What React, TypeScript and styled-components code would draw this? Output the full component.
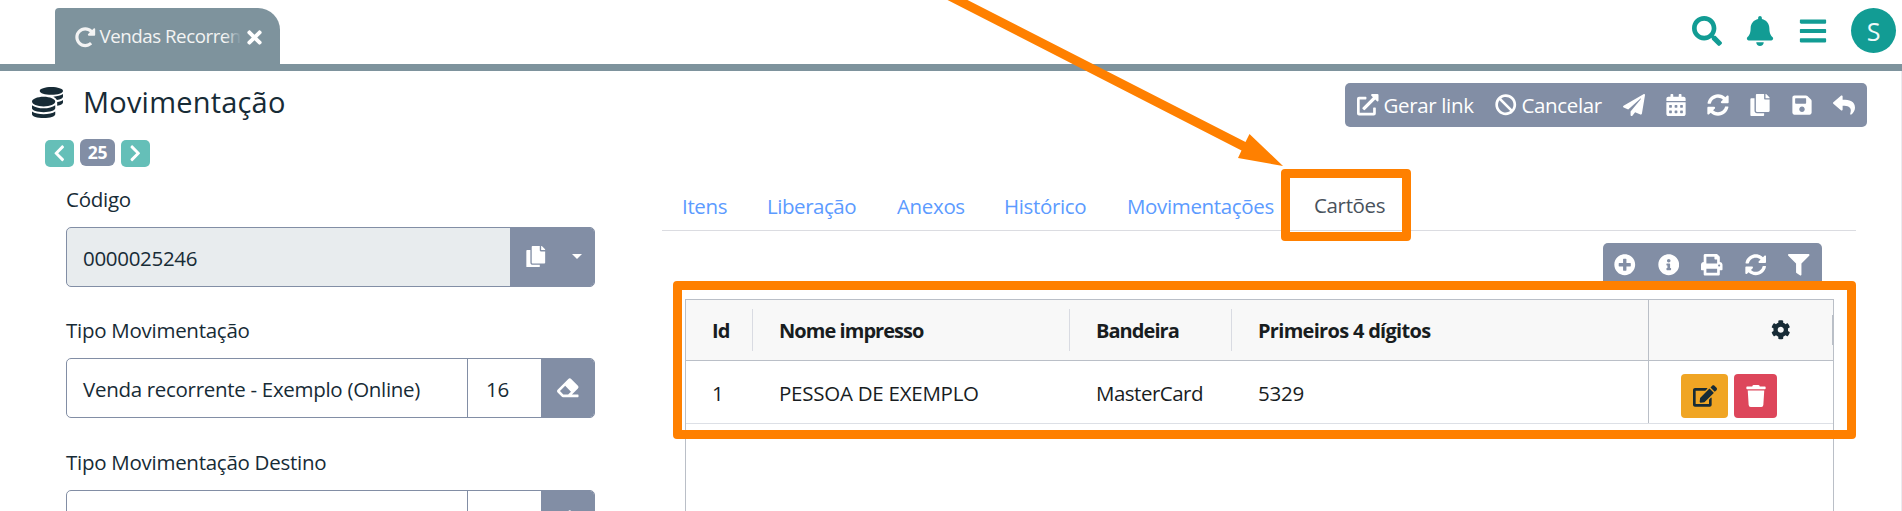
import React from 'react';
import styled, { createGlobalStyle } from 'styled-components';
import {
  FaBan, FaBars, FaBell, FaCalendarAlt, FaChevronLeft, FaChevronRight, FaCog, FaCoins, FaCopy,
  FaEdit, FaEraser, FaExternalLinkAlt, FaFilter, FaInfoCircle, FaPaperPlane, FaPlusCircle,
  FaPrint, FaRedoAlt, FaReply, FaSave, FaSearch, FaSyncAlt, FaTimes, FaTrash,
} from 'react-icons/fa';

const slate = '#828ea5';
const bar = '#7e939d';
const teal = '#129c94';
const ink = '#172b36';
const orange = '#ff8000';

const GlobalStyle = createGlobalStyle`
  * { box-sizing: border-box; }
  html, body { margin: 0; overflow: hidden; background: #fff; }
  body { font: 400 20.5px/30px 'Open Sans', 'Noto Sans', sans-serif; color: ${ink}; letter-spacing: -0.27px; }
  svg { display: block; flex: none; }
`;

const Page = styled.div`
  position: relative;
  height: 511px;
  overflow: hidden;
`;

const TopBar = styled.header`
  display: flex;
  justify-content: space-between;
  height: 71px;
  padding: 0 6px 0 55px;
  border-bottom: 7px solid ${bar};
`;

const WindowTab = styled.div`
  display: flex;
  align-items: center;
  align-self: flex-end;
  width: 225px;
  height: 56px;
  padding: 3px 15px 0 20px;
  border-radius: 4px 22px 0 0;
  background: ${bar};
  color: #f3f3f3;
  font-size: 18.7px;
`;

const WindowTitle = styled.span`
  position: relative;
  flex: none;
  margin: -3px 0 0 4px;
  white-space: nowrap;
  letter-spacing: -0.45px;
  &::after {
    content: '';
    position: absolute;
    inset: 0 0 0 auto;
    width: 16px;
    background: linear-gradient(to right, transparent, ${bar});
  }
`;

const CloseIcon = styled(FaTimes)`
  margin-left: auto;
  color: #fff;
`;

const TopActions = styled.div`
  display: flex;
  align-items: center;
  gap: 23px;
  height: 61px;
  color: ${teal};
`;

const Avatar = styled.div`
  width: 45px;
  height: 45px;
  border-radius: 50%;
  background: ${teal};
  color: #eefafa;
  font-size: 25px;
  line-height: 46px;
  text-align: center;
`;

const Main = styled.main`
  height: 560px;
  border-right: 1px solid #ebebf0;
`;

const TitleRow = styled.div`
  display: flex;
  justify-content: space-between;
  height: 68px;
  padding: 12px 34px 0 32px;
`;

const Heading = styled.h1`
  display: flex;
  align-items: center;
  gap: 20px;
  height: 38px;
  margin: 0;
  font-size: 29px;
  font-weight: 500;
  letter-spacing: 0.2px;
`;

const ActionBar = styled.div`
  display: flex;
  align-items: center;
  width: 522px;
  height: 44px;
  padding-left: 12px;
  border-radius: 5px;
  background: ${slate};
  color: #fff;
`;

const Action = styled.div<{ $width?: number }>`
  display: flex;
  flex: none;
  align-items: center;
  gap: 5px;
  width: ${p => p.$width ?? 42}px;
  white-space: nowrap;
  letter-spacing: -0.35px;
`;

const Pager = styled.div`
  display: flex;
  gap: 6px;
  height: 28px;
  padding-left: 45px;
`;

const PageStep = styled.div`
  display: flex;
  align-items: center;
  justify-content: center;
  width: 29px;
  height: 27px;
  margin-top: 1px;
  border-radius: 5px;
  background: #65bfb8;
  color: #fff;
`;

const PageNumber = styled.div`
  width: 35px;
  height: 27px;
  border-radius: 6px;
  background: ${slate};
  color: #fff;
  font-size: 17.5px;
  font-weight: 700;
  line-height: 27px;
  text-align: center;
`;

const Columns = styled.div`
  display: flex;
`;

const Form = styled.div`
  width: 662px;
  padding: 17px 67px 0 66px;
`;

const Field = styled.div`
  display: flex;
  flex-direction: column;
  gap: 13px;
  margin-bottom: 28.4px;
`;

const InputGroup = styled.div<{ $disabled?: boolean }>`
  display: flex;
  height: 60px;
  border: 1px solid ${slate};
  border-radius: 5px;
  overflow: hidden;
  background: ${p => (p.$disabled ? '#e8ecee' : '#fff')};
`;

const Value = styled.div`
  flex: 1;
  padding-left: 16px;
  line-height: 60px;
  letter-spacing: -0.3px;
`;

const Code = styled.div`
  width: 74px;
  padding-left: 18px;
  border-left: 1px solid ${slate};
  line-height: 60px;
`;

const Addon = styled.div<{ $width: number }>`
  display: flex;
  align-items: center;
  gap: 25px;
  width: ${p => p.$width}px;
  padding: 0 0 1px ${p => (p.$width > 60 ? 15 : 16)}px;
  background: ${slate};
  color: #fff;
`;

const Caret = styled.i`
  border: 5.5px solid transparent;
  border-top-color: #fff;
  border-bottom: 0;
`;

const Detail = styled.section`
  width: 1194px;
  padding-top: 12px;
`;

const Tabs = styled.nav`
  display: flex;
  height: 52px;
  border-bottom: 1px solid #dbdce1;
`;

const Tab = styled.div<{ $width: number; $active?: boolean; $ls?: number }>`
  width: ${p => p.$width}px;
  height: 52px;
  padding: 11px 0 0 19px;
  border: 1px solid ${p => (p.$active ? '#dbdce1 #dbdce1 #fff' : 'transparent')};
  border-bottom-width: ${p => (p.$active ? 1 : 0)}px;
  border-radius: 5px 5px 0 0;
  color: ${p => (p.$active ? '#49525c' : '#5c9bff')};
  letter-spacing: ${p => p.$ls ?? -0.35}px;
`;

const GridTools = styled.div`
  display: flex;
  gap: 22px;
  width: 219px;
  height: 46px;
  margin: 12px 34px 10px auto;
  padding: 11px 0 0 11px;
  border-radius: 5px 5px 0 0;
  background: ${slate};
  color: #fff;
`;

const Grid = styled.div`
  width: 1149px;
  height: 300px;
  margin-left: 23px;
  border: 1px solid #babfc7;
`;

const GridRow = styled.div<{ $header?: boolean }>`
  display: grid;
  grid-template-columns: 67px 317px 162px 416px 1fr;
  align-items: center;
  height: ${p => (p.$header ? 61 : 63)}px;
  border-bottom: 1px solid ${p => (p.$header ? '#babfc7' : '#dde0e6')};
  background: ${p => (p.$header ? '#f8f8f8' : '#fff')};
  color: #181d1f;
`;

const HeadCell = styled.div<{ $last?: boolean; $ls?: number }>`
  height: 42px;
  padding-left: 26px;
  border-right: ${p => (p.$last ? '0' : '1.5px solid #d9dbe2')};
  font-size: 20px;
  font-weight: 700;
  line-height: 44px;
  letter-spacing: ${p => p.$ls ?? -0.95}px;
`;

const Cell = styled.div<{ $ls?: number }>`
  padding: 1px 0 0 26px;
  letter-spacing: ${p => p.$ls ?? -0.25}px;
`;

const PinnedHead = styled.div`
  display: flex;
  align-items: center;
  justify-content: space-between;
  height: 60px;
  padding-left: 121.5px;
  border-left: 1px solid #babfc7;
  color: ${ink};
  &::after {
    content: '';
    width: 1px;
    height: 30px;
    background: #babfc7;
  }
`;

const PinnedCell = styled.div`
  display: flex;
  gap: 6px;
  height: 62px;
  padding: 13px 0 0 32px;
  border-left: 1px solid #babfc7;
`;

const RowButton = styled.div<{ $danger?: boolean }>`
  display: flex;
  align-items: center;
  justify-content: center;
  width: ${p => (p.$danger ? 43 : 47)}px;
  height: 44px;
  border-radius: 4px;
  background: ${p => (p.$danger ? '#dd465b' : '#f0a524')};
  color: ${p => (p.$danger ? '#fff' : ink)};
`;

const Highlight = styled.div<{ $x: number; $y: number; $w: number; $h: number }>`
  position: absolute;
  left: ${p => p.$x}px;
  top: ${p => p.$y}px;
  width: ${p => p.$w}px;
  height: ${p => p.$h}px;
  border: 9px solid ${orange};
  border-radius: 4px;
`;

const Arrow = styled.svg`
  position: absolute;
  left: 940px;
  top: 0;
`;

function Lookup({ label, value, code }: { label: string; value: string; code: string }) {
  return (
    <Field>
      {label}
      <InputGroup>
        <Value>{value}</Value>
        <Code>{code}</Code>
        <Addon $width={53}><FaEraser size={21.5} /></Addon>
      </InputGroup>
    </Field>
  );
}

export default function App() {
  return (
    <Page>
      <GlobalStyle />
      <TopBar>
        <WindowTab>
          <FaRedoAlt size={20.5} />
          <WindowTitle>Vendas Recorren</WindowTitle>
          <CloseIcon size={21} />
        </WindowTab>
        <TopActions>
          <FaSearch size={30} />
          <FaBell size={30} />
          <FaBars size={30} />
          <Avatar>S</Avatar>
        </TopActions>
      </TopBar>
      <Main>
        <TitleRow>
          <Heading><FaCoins size={31} />Movimentação</Heading>
          <ActionBar>
            <Action $width={138}><FaExternalLinkAlt size={21.5} />Gerar link</Action>
            <Action $width={128}><FaBan size={21.5} />Cancelar</Action>
            <Action><FaPaperPlane size={22} /></Action>
            <Action><FaCalendarAlt size={22} /></Action>
            <Action><FaSyncAlt size={22} /></Action>
            <Action><FaCopy size={22} /></Action>
            <Action><FaSave size={22} /></Action>
            <Action><FaReply size={22} /></Action>
          </ActionBar>
        </TitleRow>
        <Pager>
          <PageStep><FaChevronLeft size={18.5} /></PageStep>
          <PageNumber>25</PageNumber>
          <PageStep><FaChevronRight size={18.5} /></PageStep>
        </Pager>
        <Columns>
          <Form>
            <Field>
              Código
              <InputGroup $disabled>
                <Value>0000025246</Value>
                <Addon $width={84}><FaCopy size={21.5} /><Caret /></Addon>
              </InputGroup>
            </Field>
            <Lookup label="Tipo Movimentação" value="Venda recorrente - Exemplo (Online)" code="16" />
            <Lookup label="Tipo Movimentação Destino" value="" code="" />
          </Form>
          <Detail>
            <Tabs>
              <Tab $width={85}>Itens</Tab>
              <Tab $width={130} $ls={-0.45}>Liberação</Tab>
              <Tab $width={107}>Anexos</Tab>
              <Tab $width={123}>Histórico</Tab>
              <Tab $width={188}>Movimentações</Tab>
              <Tab $width={111} $active>Cartões</Tab>
            </Tabs>
            <GridTools>
              <FaPlusCircle size={21.5} />
              <FaInfoCircle size={21.5} />
              <FaPrint size={21.5} />
              <FaSyncAlt size={21.5} />
              <FaFilter size={21.5} />
            </GridTools>
            <Grid>
              <GridRow $header>
                <HeadCell>Id</HeadCell>
                <HeadCell>Nome impresso</HeadCell>
                <HeadCell>Bandeira</HeadCell>
                <HeadCell $last $ls={-0.7}>Primeiros 4 dígitos</HeadCell>
                <PinnedHead><FaCog size={19.5} /></PinnedHead>
              </GridRow>
              <GridRow>
                <Cell>1</Cell>
                <Cell>PESSOA DE EXEMPLO</Cell>
                <Cell $ls={-0.5}>MasterCard</Cell>
                <Cell>5329</Cell>
                <PinnedCell>
                  <RowButton><FaEdit size={24} /></RowButton>
                  <RowButton $danger><FaTrash size={22} /></RowButton>
                </PinnedCell>
              </GridRow>
            </Grid>
          </Detail>
        </Columns>
      </Main>
      <Arrow width="350" height="170" viewBox="940 0 350 170" fill={orange}>
        <polygon points="947.5,0 967.5,0 1245.5,142 1249.5,134 1283,166 1238,158 1241.5,150.5" />
      </Arrow>
      <Highlight $x={1281} $y={169} $w={130} $h={72} />
      <Highlight $x={673} $y={281} $w={1183} $h={158} />
    </Page>
  );
}
